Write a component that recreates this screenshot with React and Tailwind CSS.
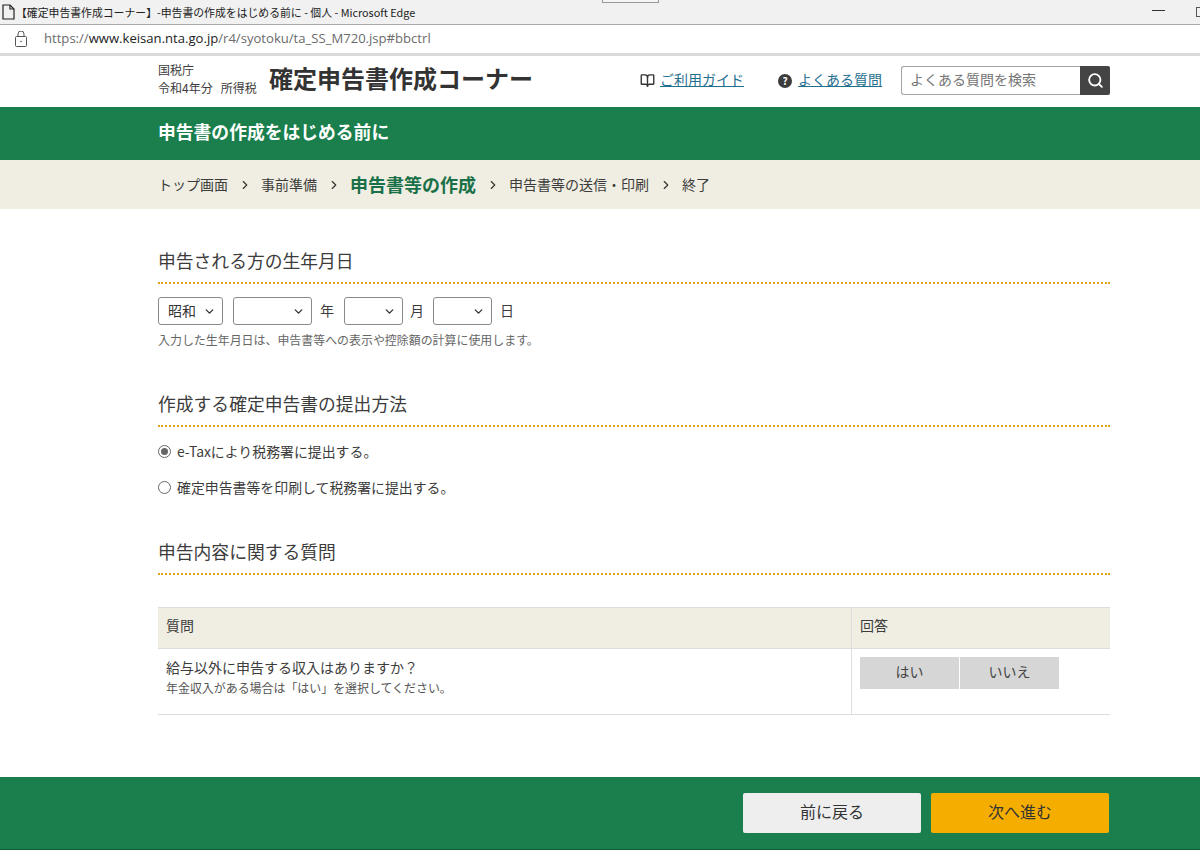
import React from 'react';
import { ChevronDown, ChevronRight, Search, BookOpen } from 'lucide-react';

const jp = '[font-family:"Noto_Sans_CJK_JP","Noto_Sans",sans-serif]';

function DateSelect({ label, width }) {
  return (
    <div className={`flex items-center justify-between h-[28px] pl-[9px] pr-[6px] pb-[2px] border border-[#8a8a8a] rounded-[3px] bg-white text-[14px] text-[#333] ${width}`}>
      <span>{label}</span>
      <ChevronDown size={13} strokeWidth={2.5} className="text-[#333] ml-auto mt-[2px]" />
    </div>
  );
}

function SectionTitle({ children, className }) {
  return (
    <h2 className={`h-[38px] text-[17.8px] leading-[28px] text-[#3c3c3c] whitespace-nowrap border-b-2 border-dotted border-[#e0a41c] ${className}`}>
      {children}
    </h2>
  );
}

function Crumb({ children, active }) {
  return active
    ? <span className="text-[18px] font-bold text-[#1a7048]">{children}</span>
    : <span className="text-[14px] text-[#3c3c3c]">{children}</span>;
}

function Sep() {
  return <ChevronRight size={14} strokeWidth={2} className="text-[#333] mx-[9.5px]" />;
}

export default function App() {
  return (
    <div className={`w-[1200px] h-[850px] overflow-hidden bg-white flex flex-col ${jp}`}>
      {/* browser title bar */}
      <div className="relative h-[25px] shrink-0 bg-[#f1f1f1] border-b border-[#a9a9a9] flex items-center pl-[2px]">
        <svg width="13" height="16" viewBox="0 0 13 16" fill="none" stroke="#222" strokeWidth="1.2">
          <path d="M1 1h7l4 4v10H1z" />
          <path d="M8 1v4h4" />
        </svg>
        <span className="ml-[1px] text-[10.85px] text-[#222] whitespace-nowrap">【確定申告書作成コーナー】-申告書の作成をはじめる前に - 個人 - Microsoft Edge</span>
        <div className="absolute left-[602px] top-0 w-[57px] h-[3px] bg-[#f4f4f4] border-x border-b border-[#999]" />
        <div className="absolute left-[1152px] top-[10px] w-[13px] h-px bg-[#333]" />
        <div className="absolute left-[1196px] top-[7px] w-[4px] h-[10px] border-l border-y border-[#555] rounded-l-[1px]" />
      </div>

      {/* address bar */}
      <div className="h-[28px] shrink-0 bg-white flex items-center pl-[15px]">
        <svg width="12" height="16" viewBox="0 0 12 16" fill="none" stroke="#555" strokeWidth="1">
          <rect x="0.5" y="5.5" width="11" height="10" rx="1" />
          <path d="M3 5.5V3a3 3 0 0 1 6 0v2.5" />
          <circle cx="6" cy="10.5" r="0.8" fill="#555" stroke="none" />
        </svg>
        <span className="ml-[17px] text-[13.1px] text-[#6b6b6b] whitespace-nowrap [font-family:'Open_Sans','Noto_Sans',sans-serif]">
          https://<span className="text-[#222]">www.keisan.nta.go.jp</span>/r4/syotoku/ta_SS_M720.jsp#bbctrl
        </span>
      </div>
      <div className="h-[3px] shrink-0 bg-[#d9d9d9]" />

      {/* site header */}
      <header className="h-[51px] shrink-0 pl-[158px] pb-[2px] flex items-center">
        <div className="w-[952px] flex items-center">
          <div className="text-[12px] leading-[18px] text-[#3c3c3c] w-[111px] pb-[3px]">
            <div>国税庁</div>
            <div className="whitespace-nowrap">令和4年分&nbsp;&nbsp;&nbsp;所得税</div>
          </div>
          <div className="text-[24px] leading-[32px] font-bold text-[#333] whitespace-nowrap pb-[5px]">確定申告書作成コーナー</div>
          <div className="ml-auto flex items-center">
            <BookOpen size={15} strokeWidth={2.2} className="text-[#333] mr-[5px]" />
            <a className="text-[14px] leading-[20px] pb-[4px] text-[#1f6f8f] underline">ご利用ガイド</a>
            <span className="ml-[34px] mr-[6px] w-[14px] h-[14px] rounded-full bg-[#3c3c3c] text-white text-[10px] leading-[14px] font-bold flex items-center justify-center">?</span>
            <a className="text-[14px] leading-[20px] pb-[4px] text-[#1f6f8f] underline">よくある質問</a>
            <div className="ml-[19px] flex w-[209px] h-[29px]">
              <div className="flex-1 border border-[#a5a5a5] border-r-0 rounded-l-[3px] pl-[8px] text-[14px] leading-[24px] text-[#757575]">よくある質問を検索</div>
              <div className="w-[30px] bg-[#444] rounded-r-[2px] flex items-center justify-center">
                <Search size={17} strokeWidth={2.6} className="text-white" />
              </div>
            </div>
          </div>
        </div>
      </header>

      {/* green title */}
      <div className="h-[53px] shrink-0 bg-[#1a7f4c] pl-[158px] pb-[5px] flex items-center text-[17.8px] font-bold text-white">
        申告書の作成をはじめる前に
      </div>

      {/* steps */}
      <div className="h-[49px] shrink-0 bg-[#f0eee2] pl-[158px] flex items-center">
        <Crumb>トップ画面</Crumb><Sep />
        <Crumb>事前準備</Crumb><Sep />
        <Crumb active>申告書等の作成</Crumb><Sep />
        <Crumb>申告書等の送信・印刷</Crumb><Sep />
        <Crumb>終了</Crumb>
      </div>

      {/* body */}
      <main className="flex-1 ml-[158px] w-[952px] pt-[37px]">
        <SectionTitle>申告される方の生年月日</SectionTitle>
        <div className="mt-[13px] flex items-center text-[14px] text-[#3c3c3c]">
          <DateSelect label="昭和" width="w-[65px]" />
          <DateSelect label="" width="w-[79px] ml-[10px]" />
          <span className="ml-[8px] mr-[10px] pb-[2px]">年</span>
          <DateSelect label="" width="w-[59px]" />
          <span className="ml-[7px] mr-[9px] pb-[2px]">月</span>
          <DateSelect label="" width="w-[59px]" />
          <span className="ml-[8px] pb-[2px]">日</span>
        </div>
        <p className="mt-[6px] text-[11.95px] leading-[18px] text-[#666] whitespace-nowrap">入力した生年月日は、申告書等への表示や控除額の計算に使用します。</p>

        <SectionTitle className="mt-[40px]">作成する確定申告書の提出方法</SectionTitle>
        <div className="mt-[14px] flex flex-col gap-[16px] text-[13.9px] text-[#3c3c3c]">
          <label className="flex items-center h-[20px]">
            <span className="w-[13px] h-[13px] rounded-full border border-[#666] flex items-center justify-center">
              <span className="w-[7px] h-[7px] rounded-full bg-[#666]" />
            </span>
            <span className="ml-[6px]">e-Taxにより税務署に提出する。</span>
          </label>
          <label className="flex items-center h-[20px]">
            <span className="w-[13px] h-[13px] rounded-full border border-[#666]" />
            <span className="ml-[6px]">確定申告書等を印刷して税務署に提出する。</span>
          </label>
        </div>

        <SectionTitle className="mt-[40px]">申告内容に関する質問</SectionTitle>

        <div className="mt-[32px] border-t border-[#ddd]">
          <div className="flex h-[41px] bg-[#f0eee2] border-b border-[#ddd] text-[14px] leading-[35px] text-[#3c3c3c]">
            <div className="w-[694px] pl-[8px] border-r border-[#ddd]">質問</div>
            <div className="flex-1 pl-[8px]">回答</div>
          </div>
          <div className="flex h-[66px] border-b border-[#ddd]">
            <div className="w-[694px] pl-[8px] pt-[7px] border-r border-[#ddd]">
              <div className="text-[14px] leading-[22px] text-[#3c3c3c]">給与以外に申告する収入はありますか？</div>
              <div className="text-[11.95px] leading-[20px] text-[#555] whitespace-nowrap">年金収入がある場合は「はい」を選択してください。</div>
            </div>
            <div className="flex-1 pl-[8px] pt-[8px]">
              <div className="flex gap-px text-[14px] text-[#444]">
                <div className="w-[99px] h-[32px] pb-[3px] bg-[#d6d6d6] flex items-center justify-center">はい</div>
                <div className="w-[99px] h-[32px] pb-[3px] bg-[#d6d6d6] flex items-center justify-center">いいえ</div>
              </div>
            </div>
          </div>
        </div>
      </main>

      {/* footer */}
      <footer className="h-[73px] shrink-0 bg-[#1a7f4c] border-b border-[#0f5a35] pl-[743px] pt-[16px] flex gap-[10px] items-start">
        <button className="w-[178px] h-[40px] pb-[5px] rounded-[2px] bg-[#eeeeee] text-[16px] text-[#333]">前に戻る</button>
        <button className="w-[178px] h-[40px] pb-[5px] rounded-[2px] bg-[#f5ae00] text-[16px] text-[#333]">次へ進む</button>
      </footer>
    </div>
  );
}
